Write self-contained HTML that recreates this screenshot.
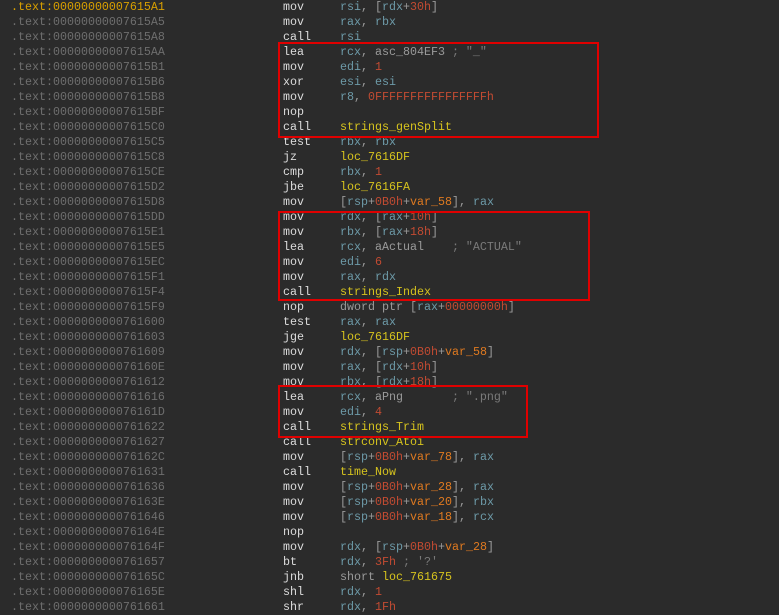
<!DOCTYPE html>
<html><head><style>
body{margin:0;width:779px;height:615px;background:#2b2b2b;overflow:hidden;position:relative;font-family:"Liberation Mono",monospace;font-size:11.67px;}
.l{position:absolute;left:0;height:15px;line-height:15px;white-space:pre;width:779px}
.a{position:absolute;left:11px;color:#6e6e6e}
.m{position:absolute;left:283px;color:#dcdcdc}
.o{position:absolute;left:340px;color:#9a9a9a}
.r{color:#6d9aa8}.n{color:#c24b32}.y{color:#d6c31e}.v{color:#e07a20}.c{color:#7a7a7a}.p{color:#a8a8a8}
.box{position:absolute;border:2px solid #e00000}
</style></head><body>
<div id="c"></div>
<script>
const L=[
["7615A1","mov",'<span class=r>rsi</span>, [<span class=r>rdx</span>+<span class=n>30h</span>]'],
["7615A5","mov",'<span class=r>rax</span>, <span class=r>rbx</span>'],
["7615A8","call",'<span class=r>rsi</span>'],
["7615AA","lea",'<span class=r>rcx</span>, asc_804EF3 <span class=c>; "_"</span>'],
["7615B1","mov",'<span class=r>edi</span>, <span class=n>1</span>'],
["7615B6","xor",'<span class=r>esi</span>, <span class=r>esi</span>'],
["7615B8","mov",'<span class=r>r8</span>, <span class=n>0FFFFFFFFFFFFFFFFh</span>'],
["7615BF","nop",''],
["7615C0","call",'<span class=y>strings_genSplit</span>'],
["7615C5","test",'<span class=r>rbx</span>, <span class=r>rbx</span>'],
["7615C8","jz",'<span class=y>loc_7616DF</span>'],
["7615CE","cmp",'<span class=r>rbx</span>, <span class=n>1</span>'],
["7615D2","jbe",'<span class=y>loc_7616FA</span>'],
["7615D8","mov",'[<span class=r>rsp</span>+<span class=n>0B0h</span>+<span class=v>var_58</span>], <span class=r>rax</span>'],
["7615DD","mov",'<span class=r>rdx</span>, [<span class=r>rax</span>+<span class=n>10h</span>]'],
["7615E1","mov",'<span class=r>rbx</span>, [<span class=r>rax</span>+<span class=n>18h</span>]'],
["7615E5","lea",'<span class=r>rcx</span>, aActual    <span class=c>; "ACTUAL"</span>'],
["7615EC","mov",'<span class=r>edi</span>, <span class=n>6</span>'],
["7615F1","mov",'<span class=r>rax</span>, <span class=r>rdx</span>'],
["7615F4","call",'<span class=y>strings_Index</span>'],
["7615F9","nop",'dword ptr [<span class=r>rax</span>+<span class=n>00000000h</span>]'],
["761600","test",'<span class=r>rax</span>, <span class=r>rax</span>'],
["761603","jge",'<span class=y>loc_7616DF</span>'],
["761609","mov",'<span class=r>rdx</span>, [<span class=r>rsp</span>+<span class=n>0B0h</span>+<span class=v>var_58</span>]'],
["76160E","mov",'<span class=r>rax</span>, [<span class=r>rdx</span>+<span class=n>10h</span>]'],
["761612","mov",'<span class=r>rbx</span>, [<span class=r>rdx</span>+<span class=n>18h</span>]'],
["761616","lea",'<span class=r>rcx</span>, aPng       <span class=c>; ".png"</span>'],
["76161D","mov",'<span class=r>edi</span>, <span class=n>4</span>'],
["761622","call",'<span class=y>strings_Trim</span>'],
["761627","call",'<span class=y>strconv_Atoi</span>'],
["76162C","mov",'[<span class=r>rsp</span>+<span class=n>0B0h</span>+<span class=v>var_78</span>], <span class=r>rax</span>'],
["761631","call",'<span class=y>time_Now</span>'],
["761636","mov",'[<span class=r>rsp</span>+<span class=n>0B0h</span>+<span class=v>var_28</span>], <span class=r>rax</span>'],
["76163E","mov",'[<span class=r>rsp</span>+<span class=n>0B0h</span>+<span class=v>var_20</span>], <span class=r>rbx</span>'],
["761646","mov",'[<span class=r>rsp</span>+<span class=n>0B0h</span>+<span class=v>var_18</span>], <span class=r>rcx</span>'],
["76164E","nop",''],
["76164F","mov",'<span class=r>rdx</span>, [<span class=r>rsp</span>+<span class=n>0B0h</span>+<span class=v>var_28</span>]'],
["761657","bt",'<span class=r>rdx</span>, <span class=n>3Fh</span> <span class=c>; \'?\'</span>'],
["76165C","jnb",'short <span class=y>loc_761675</span>'],
["76165E","shl",'<span class=r>rdx</span>, <span class=n>1</span>'],
["761661","shr",'<span class=r>rdx</span>, <span class=n>1Fh</span>']];
let h='';
L.forEach((x,i)=>{
const st=i==0?' style="color:#d9a000"':'';
h+=`<div class=l style="top:${i*15}px"><span class=a${st}>.text:0000000000${x[0]}</span><span class=m>${x[1]}</span><span class=o>${x[2]}</span></div>`;});
document.getElementById('c').innerHTML=h;
</script>
<div class="box" style="left:278px;top:42px;width:317px;height:92px"></div>
<div class="box" style="left:278px;top:211px;width:308px;height:86px"></div>
<div class="box" style="left:278px;top:385px;width:246px;height:49px"></div>
</body></html>
